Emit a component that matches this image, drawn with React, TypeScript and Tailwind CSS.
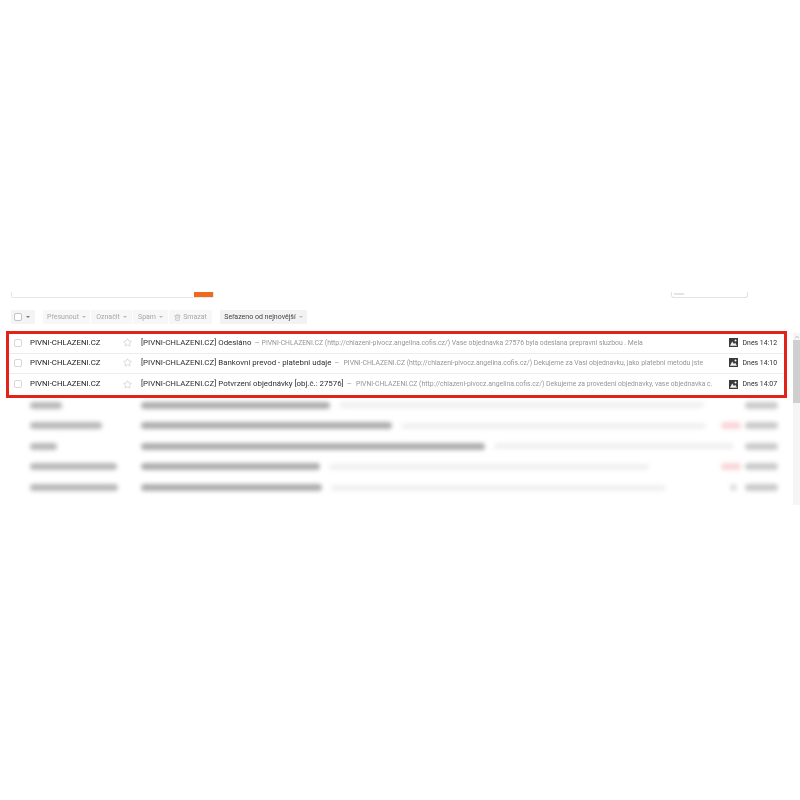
import { Star, Trash2, ChevronDown } from "lucide-react";

const mails = [
  {
    subject: "[PIVNI-CHLAZENI.CZ] Odesláno",
    snippet:
      "PIVNI-CHLAZENI.CZ (http://chlazeni-pivocz.angelina.cofis.cz/) Vase objednavka 27576 byla odeslana prepravni sluzbou . Mela",
    time: "Dnes 14:12",
    height: "h-[19.5px]",
    dash: "ml-[3px] mr-[2px]",
  },
  {
    subject: "[PIVNI-CHLAZENI.CZ] Bankovni prevod - platebni udaje",
    snippet:
      "PIVNI-CHLAZENI.CZ (http://chlazeni-pivocz.angelina.cofis.cz/) Dekujeme za Vasi objednavku, jako platebni metodu jste",
    time: "Dnes 14:10",
    height: "h-[20.7px]",
    dash: "ml-[3px] mr-[4px]",
  },
  {
    subject: "[PIVNI-CHLAZENI.CZ] Potvrzení objednávky [obj.č.: 27576]",
    snippet:
      "PIVNI-CHLAZENI.CZ (http://chlazeni-pivocz.angelina.cofis.cz/) Dekujeme za provedeni objednavky, vase objednavka c.",
    time: "Dnes 14:07",
    height: "h-[20.7px]",
    dash: "ml-[3px] mr-[4px]",
  },
];

// blurred rows, widths in px
const hidden = [
  { sender: 32, subject: 189, snippet: 365, tag: false, clip: false },
  { sender: 72, subject: 251, snippet: 305, tag: true, clip: false },
  { sender: 27, subject: 344, snippet: 240, tag: false, clip: false },
  { sender: 87, subject: 179, snippet: 320, tag: true, clip: false },
  { sender: 88, subject: 181, snippet: 335, tag: false, clip: true },
];

const Caret = () => <span className="ml-[3px] inline-block border-x-[2px] border-t-[2px] border-x-transparent border-t-[#bbb]" />;

const ToolButton = ({ label, width }: { label: string; width: string }) => (
  <div className={`flex h-[14px] items-center justify-center bg-[#f7f7f7] text-[#a8a8a8] ${width}`}>
    {label}
    <Caret />
  </div>
);

const PhotoIcon = () => (
  <svg width="9" height="9" viewBox="0 0 9 9" className="shrink-0">
    <rect width="9" height="9" fill="#3a3a3a" />
    <path d="M1 7.8 3.2 3.6 5 6l1.2-1.2L8 7.8Z" fill="#f0f0f0" />
    <circle cx="6.5" cy="2.4" r="1" fill="#fff" />
  </svg>
);

export default function App() {
  return (
    <div className="h-[800px] w-[800px] overflow-hidden bg-white pt-[292px] text-[7.88px] text-[#333] blur-[0.45px] [font-family:Roboto,sans-serif]">
      {/* search bar remains */}
      <div className="flex items-start justify-between pl-[11px] pr-[52px]">
        <div className="flex h-[6px] w-[203px] items-end justify-end rounded-b-[2px] border-x border-b border-[#e8e8e8]">
          <div className="h-[5px] w-[19px] bg-[#ee6a1f]" />
        </div>
        <div className="h-[6px] w-[77px] rounded-b-[3px] border-x border-b border-[#e2e2e2] pl-[2px] pt-[1px]">
          <div className="h-[2px] w-[10px] bg-[#e4e4e4]" />
        </div>
      </div>

      {/* toolbar */}
      <div className="mt-[12px] flex h-[14px] items-center pl-[11px] text-[7px]">
        <div className="flex h-[14px] w-[24px] items-center gap-[4px] bg-[#f4f4f4] pl-[3px]">
          <span className="h-[8px] w-[8px] rounded-[2px] border border-[#c4c4c4] bg-white" />
          <span className="border-x-[2px] border-t-[2px] border-x-transparent border-t-[#777]" />
        </div>
        <div className="ml-[8px] flex gap-px">
          <ToolButton label="Přesunout" width="w-[47px]" />
          <ToolButton label="Označit" width="w-[41px]" />
          <ToolButton label="Spam" width="w-[35px]" />
          <div className="flex h-[14px] w-[43px] items-center justify-center gap-[2px] bg-[#f7f7f7] text-[#a8a8a8]">
            <Trash2 size={7} strokeWidth={2} className="text-[#b5b5b5]" />
            Smazat
          </div>
        </div>
        <div className="ml-[8px] flex h-[14px] w-[87px] items-center justify-center bg-[#f2f2f2] text-[#444]">
          Seřazeno od nejnovější
          <Caret />
        </div>
      </div>

      <div className="mt-[7px] flex">
        <div className="ml-[6px] w-[781px]">
          {/* highlighted rows */}
          <div className="border-[3px] border-[#e2231a]">
            {mails.map((mail, i) => (
              <div
                key={mail.time}
                className={`flex items-center pb-[1px] pl-[5px] pr-[7px] ${mail.height} ${i < 2 ? "border-b border-[#ededed]" : ""}`}
              >
                <span className="h-[8px] w-[8px] shrink-0 rounded-[2px] border border-[#d8d8d8]" />
                <span className="ml-[8px] w-[93px] shrink-0 text-[7.8px] text-[#222]">PIVNI-CHLAZENI.CZ</span>
                <Star size={9} strokeWidth={1.1} className="shrink-0 text-[#aaa]" />
                <div className="ml-[9px] flex min-w-0 flex-1 items-center whitespace-nowrap">
                  <span className="shrink-0 text-[#2e2e2e]">{mail.subject}</span>
                  <span className={`shrink-0 text-[#999] ${mail.dash}`}>–</span>
                  <span className="text-[6.82px] text-[#959595]">{mail.snippet}</span>
                </div>
                <div className="flex w-[48px] shrink-0 items-center justify-between">
                  <PhotoIcon />
                  <span className="whitespace-nowrap text-[6.9px] text-[#2e2e2e]">{mail.time}</span>
                </div>
              </div>
            ))}
          </div>

          {/* blurred rows */}
          <div className="-mt-[3px]">
            {hidden.map((row, i) => (
              <div key={i} className="flex h-[20.6px] items-center pl-[24px] pr-[9px] blur-[2px]">
                <div className="w-[111px] shrink-0">
                  <div className="h-[7px] rounded-full bg-[#b8b8b8]" style={{ width: row.sender }} />
                </div>
                <div className="h-[7px] shrink-0 rounded-full bg-[#adadad]" style={{ width: row.subject }} />
                <div className="ml-[9px] h-[6px] shrink-0 rounded-full bg-[#f0f0f0]" style={{ width: row.snippet }} />
                <div className="flex-1" />
                {row.tag && <div className="mr-[4px] h-[7px] w-[20px] shrink-0 rounded-full bg-[#f9d5d8]" />}
                {row.clip && <div className="mr-[8px] h-[7px] w-[7px] shrink-0 rounded-full bg-[#dddddd]" />}
                <div className="h-[7px] w-[33px] shrink-0 rounded-full bg-[#cacaca]" />
              </div>
            ))}
          </div>
        </div>

        {/* scrollbar */}
        <div className="ml-[6px] mt-[2px] h-[172px] w-[7px] bg-[#f5f5f5]">
          <div className="flex h-[7px] items-center justify-center">
            <ChevronDown size={6} className="rotate-180 text-[#888]" />
          </div>
          <div className="h-[63px] bg-[#cfcfcf]" />
        </div>
      </div>
    </div>
  );
}
